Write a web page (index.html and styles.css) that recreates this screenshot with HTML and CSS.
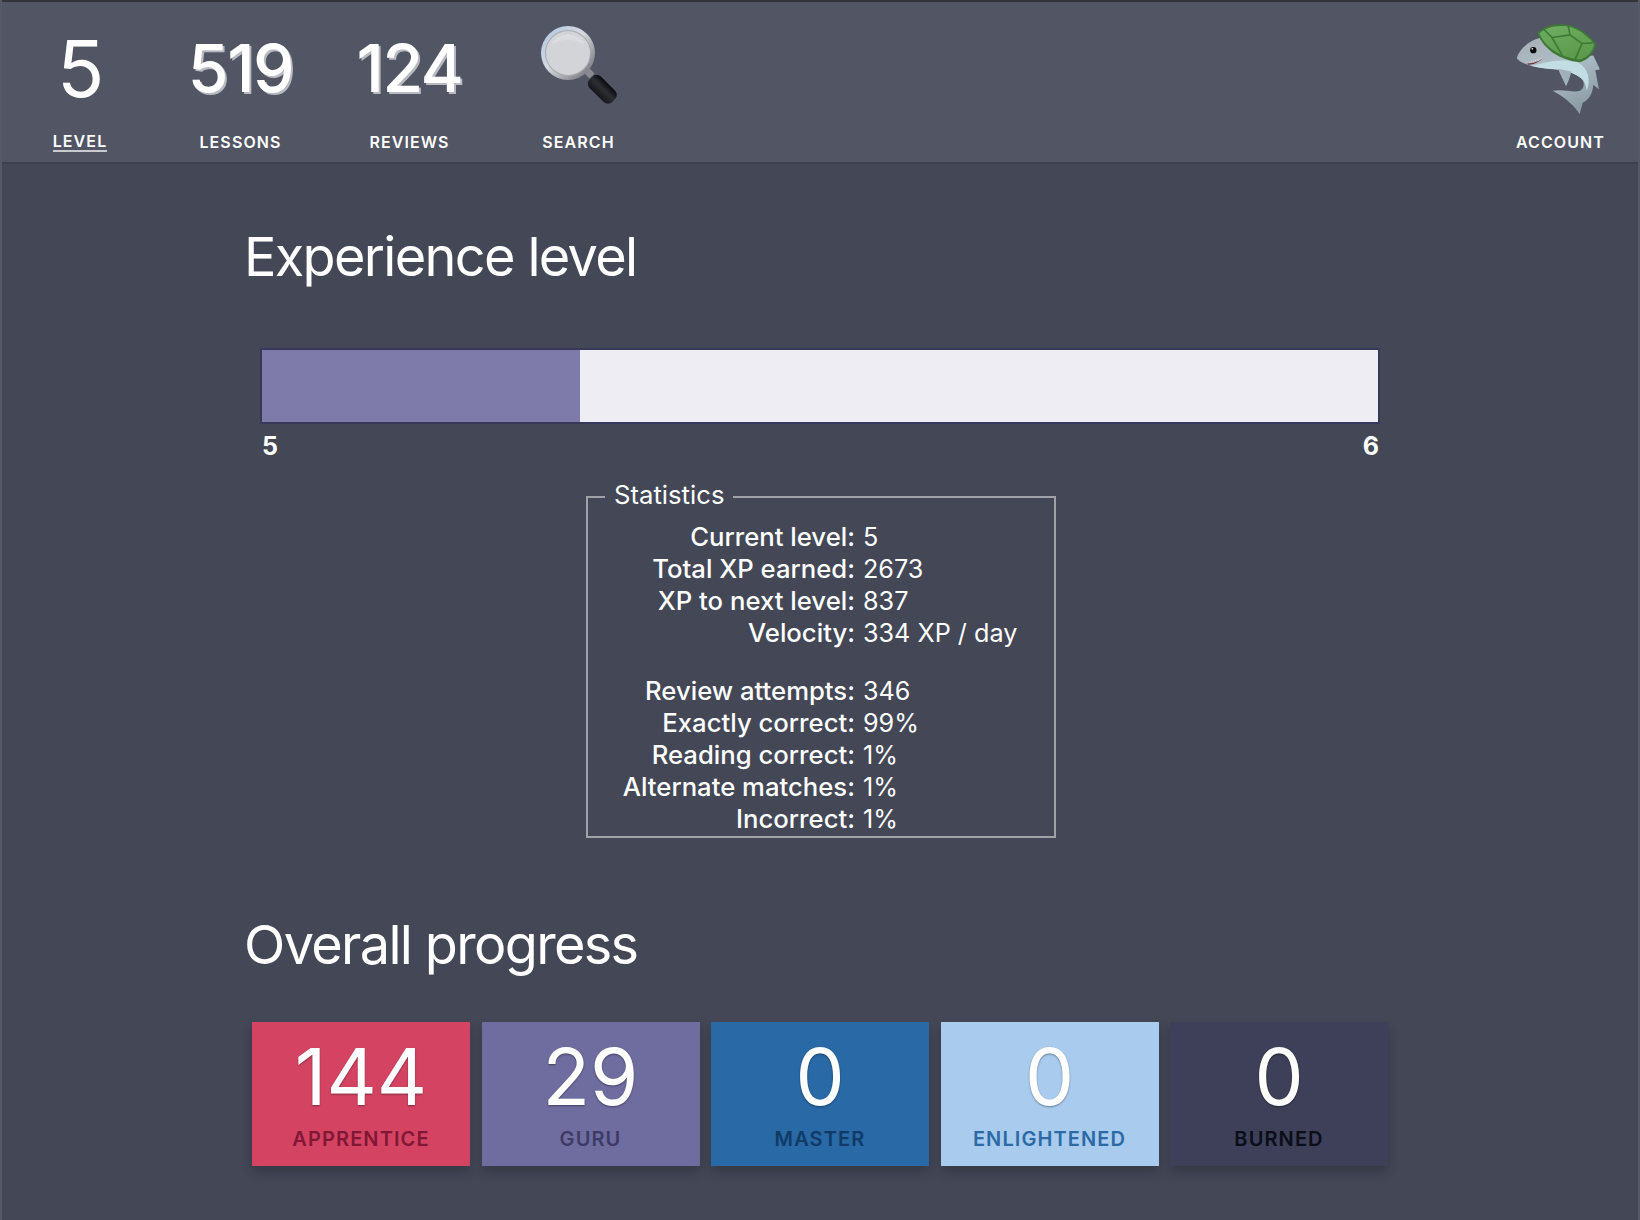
FILE: index.html
```html
<!DOCTYPE html>
<html lang="en">
<head>
<meta charset="UTF-8">
<meta name="viewport" content="width=device-width, initial-scale=1.0">
<title>Experience level</title>
<link rel="stylesheet" href="styles.css">
</head>
<body>

<nav class="topbar">
    <a class="nav-item nav-level">
        <span class="nav-value level-value">5</span>
        <span class="nav-label underlined">LEVEL</span>
    </a>
    <a class="nav-item">
        <span class="nav-value">519</span>
        <span class="nav-label">LESSONS</span>
    </a>
    <a class="nav-item">
        <span class="nav-value">124</span>
        <span class="nav-label">REVIEWS</span>
    </a>
    <a class="nav-item">
        <span class="nav-value">
            <svg class="search-icon" viewBox="0 0 110 100" width="110" height="100">
                <defs>
                    <linearGradient id="rim" x1="0" y1="0" x2="1" y2="1">
                        <stop offset="0" stop-color="#a9c6e6"/>
                        <stop offset="0.45" stop-color="#d8dade"/>
                        <stop offset="1" stop-color="#62646b"/>
                    </linearGradient>
                    <linearGradient id="handle" x1="0" y1="0" x2="1" y2="0">
                        <stop offset="0" stop-color="#15161a"/>
                        <stop offset="0.55" stop-color="#2c2e34"/>
                        <stop offset="1" stop-color="#090a0c"/>
                    </linearGradient>
                </defs>
                <path d="M66 58 L72 64" stroke="#8a8c92" stroke-width="7"/>
                <rect x="-8" y="0" width="16" height="32" rx="6" transform="translate(71 66) rotate(-45)" fill="url(#handle)"/>
                <circle cx="48" cy="41" r="27" fill="url(#rim)"/>
                <circle cx="48" cy="41" r="23" fill="#a9abb1"/>
                <circle cx="48" cy="41" r="22" fill="#d3d4d8"/>
                <path d="M31 33 A19 19 0 0 1 65 33 A30 30 0 0 0 31 33Z" fill="#dcdde0"/>
            </svg>
        </span>
        <span class="nav-label">SEARCH</span>
    </a>
    <a class="nav-item nav-account">
        <span class="nav-value">
            <svg class="account-icon" viewBox="100 60 270 290" width="90" height="97">
                <defs>
                    <linearGradient id="sharkBody" x1="0" y1="0" x2="0.6" y2="1">
                        <stop offset="0" stop-color="#a8aeb6"/>
                        <stop offset="0.5" stop-color="#aebfc8"/>
                        <stop offset="1" stop-color="#8d9da6"/>
                    </linearGradient>
                    <linearGradient id="shell" x1="0" y1="0" x2="0.4" y2="1">
                        <stop offset="0" stop-color="#6fae62"/>
                        <stop offset="1" stop-color="#5d9a4e"/>
                    </linearGradient>
                </defs>
                <path d="M108 174 C118 142 150 120 180 113 L300 170 L338 166 L358 208 L344 210 L355 268 L338 254 C336 280 326 298 306 308 L297 342 C285 322 255 292 216 272 C245 266 278 278 298 272 C314 262 312 240 298 232 C280 218 255 212 230 208 C190 205 130 200 108 174Z" fill="url(#sharkBody)"/>
                <path d="M150 197 C190 190 230 172 290 186 C322 200 332 240 318 272 C316 250 310 240 298 232 C280 218 255 212 230 208 C200 206 175 204 150 197Z" fill="#c3dde4"/>
                <path d="M232 206 L272 214 C268 232 262 248 256 258 C248 240 238 222 232 206Z" fill="#9fb0b8"/>
                <path d="M140 190 C160 190 178 184 190 170 C186 178 165 194 142 194Z" fill="#7a2f38"/>
                <path d="M146 187 L188 173" stroke="#e6e6e6" stroke-width="3" stroke-dasharray="3 3"/>
                <circle cx="158" cy="150" r="9.5" fill="#0d0d10"/>
                <circle cx="155" cy="146" r="2.5" fill="#ffffff"/>
                <path d="M170 99 C200 68 262 62 305 92 C328 108 342 125 346 132 C342 158 322 180 298 186 C240 180 190 150 170 99Z" fill="#3f7a35"/>
                <path d="M176 100 C205 74 262 68 302 96 C322 110 336 124 340 133 C336 155 318 174 296 178 C244 172 196 146 176 100Z" fill="url(#shell)"/>
                <path d="M214 112 L268 104 L304 130 L284 176 M214 112 L190 88 M214 112 L244 164 M268 104 L262 74 M304 130 L336 128" fill="none" stroke="#3f7a35" stroke-width="5"/>
            </svg>
        </span>
        <span class="nav-label">ACCOUNT</span>
    </a>
</nav>

<main class="content">
    <h1 class="section-title">Experience level</h1>

    <div class="xp">
        <div class="xp-bar">
            <div class="xp-fill" style="width: 28.5%"></div>
        </div>
        <div class="xp-ends">
            <span>5</span>
            <span>6</span>
        </div>
    </div>

    <fieldset class="stats">
        <legend>Statistics</legend>
        <div class="stats-row"><span class="stat-name">Current level:</span><span>5</span></div>
        <div class="stats-row"><span class="stat-name">Total XP earned:</span><span>2673</span></div>
        <div class="stats-row"><span class="stat-name">XP to next level:</span><span>837</span></div>
        <div class="stats-row stats-row-gap"><span class="stat-name">Velocity:</span><span>334 XP / day</span></div>
        <div class="stats-row"><span class="stat-name">Review attempts:</span><span>346</span></div>
        <div class="stats-row"><span class="stat-name">Exactly correct:</span><span>99%</span></div>
        <div class="stats-row"><span class="stat-name">Reading correct:</span><span>1%</span></div>
        <div class="stats-row"><span class="stat-name">Alternate matches:</span><span>1%</span></div>
        <div class="stats-row"><span class="stat-name">Incorrect:</span><span>1%</span></div>
    </fieldset>

    <h1 class="section-title overall-title">Overall progress</h1>

    <div class="cards">
        <div class="card apprentice">
            <div class="card-count">144</div>
            <div class="card-label">APPRENTICE</div>
        </div>
        <div class="card guru">
            <div class="card-count">29</div>
            <div class="card-label">GURU</div>
        </div>
        <div class="card master">
            <div class="card-count">0</div>
            <div class="card-label">MASTER</div>
        </div>
        <div class="card enlightened">
            <div class="card-count">0</div>
            <div class="card-label">ENLIGHTENED</div>
        </div>
        <div class="card burned">
            <div class="card-count">0</div>
            <div class="card-label">BURNED</div>
        </div>
    </div>
</main>

</body>
</html>
```

FILE: styles.css
```css
html, body {
    height: 100%;
}

body {
    margin: 0;
    padding: 0;
    overflow: hidden;
    font-family: Inter, "Liberation Sans", sans-serif;
    color: #fff;
    background-color: #434756;
    border-left: 2px solid #555865;
    border-right: 2px solid #555865;
}

.topbar {
    display: flex;
    height: 162px;
    box-sizing: border-box;
    padding: 0 33px 0 23px;
    border-top: 2px solid #33343a;
    background-color: #525564;
    box-shadow: 0 2px 0 #3c3f4d;
}

.nav-item {
    display: flex;
    flex-direction: column;
    align-items: center;
    width: 169px;
    flex: none;
}

.nav-level {
    width: 110px;
    margin-right: 21px;
}

.nav-account {
    width: auto;
    margin-left: auto;
}

.nav-value {
    height: 100px;
    padding-top: 16px;
    display: flex;
    align-items: center;
    justify-content: center;
    font-size: 66px;
    font-weight: 500;
    letter-spacing: -1.5px;
    text-shadow: 2px 2px 0 #b9b9c2;
}

.level-value {
    font-size: 78px;
    font-weight: 400;
    text-shadow: none;
}

.nav-label {
    margin-top: 14px;
    font-size: 16px;
    font-weight: 600;
    letter-spacing: 1.1px;
    line-height: 20px;
}

.underlined {
    border-bottom: 2px solid #c9cad0;
    line-height: 18px;
}

.search-icon {
    display: block;
    margin: -12px 0 0 -8px;
}

.account-icon {
    display: block;
    margin-left: -3px;
}

.content {
    width: 1148px;
    margin: 0 auto;
}

.section-title {
    margin: 61px 0 0 -2px;
    font-size: 54px;
    font-weight: 400;
    line-height: 68px;
    letter-spacing: -1.66px;
}

.xp {
    margin: 57px 14px 0;
}

.xp-bar {
    height: 72px;
    border: 2px solid #38395a;
    background-color: #eeedf3;
}

.xp-fill {
    height: 100%;
    background-color: #7e7bab;
}

.xp-ends {
    display: flex;
    justify-content: space-between;
    margin-top: 8px;
    padding: 0 1px 0 2px;
    font-size: 25px;
    font-weight: 700;
    line-height: 28px;
}

.stats {
    width: 470px;
    box-sizing: border-box;
    margin: 19px 0 0 340px;
    padding: 6px 0 1px;
    border: 2px solid #a0a2a8;
    font-size: 25.2px;
    line-height: 32px;
}

.stats legend {
    margin-left: 17px;
    padding: 0 9px 4px;
    font-size: 25.7px;
}

.stats-row {
    display: grid;
    grid-template-columns: 267px 1fr;
    column-gap: 8px;
}

.stats-row-gap {
    margin-bottom: 26px;
}

.stat-name {
    text-align: right;
    font-size: 25.7px;
    font-weight: 500;
}

.overall-title {
    margin-top: 73px;
}

.cards {
    display: flex;
    justify-content: space-between;
    margin: 43px 6px 0;
}

.card {
    width: 218px;
    height: 144px;
    text-align: center;
    box-shadow: 0 6px 10px rgba(0, 0, 0, 0.2);
}

.card-count {
    padding-top: 9px;
    font-size: 78px;
    line-height: 92px;
    color: #fff;
    text-shadow: 0 1px 2px rgba(0, 0, 0, 0.4);
}

.card-label {
    margin-top: 3px;
    font-size: 20px;
    font-weight: 600;
    letter-spacing: 1.1px;
    line-height: 26px;
}

.apprentice { background-color: #d44462; color: #801736; }
.guru { background-color: #6f6ca0; color: #3d3b66; }
.master { background-color: #2869a6; color: #123a66; }
.enlightened { background-color: #a9cbee; color: #2b6aa5; }
.burned { background-color: #3d4058; color: #0b0d18; }
```
